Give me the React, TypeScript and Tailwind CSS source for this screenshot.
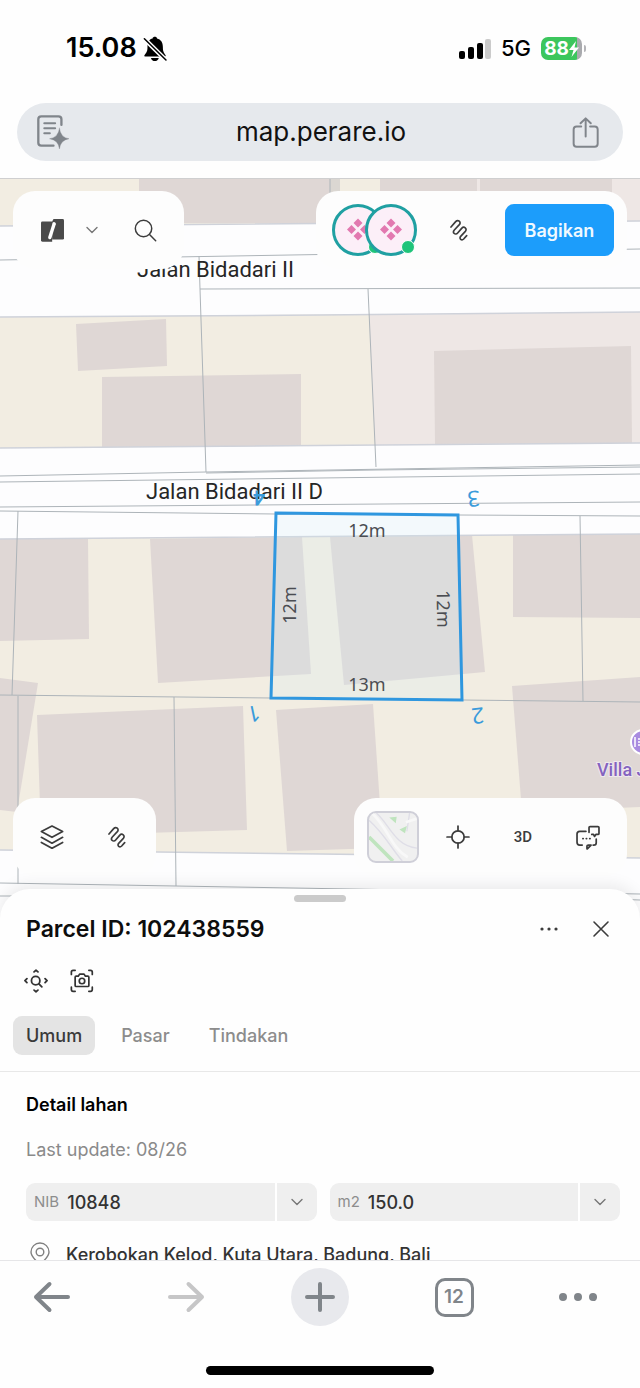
import { useState } from 'react'
import type { ReactNode } from 'react'

const TABS = ['Umum', 'Pasar', 'Tindakan']

const BUILDINGS = [
  '139,178 330,178 330,223 139,223',
  '380,178 477,178 477,221 380,221',
  '480,178 612,178 612,221 480,221',
  '76,324 166,319 167,366 78,371',
  '102,377 301,374 301,446 102,447',
  '434,351 631,346 632,443 435,444',
  '0,539 88,539 89,639 0,641',
  '150,539 302,537 311,674 158,683',
  '330,537 472,535 485,672 344,685',
  '513,535 640,534 640,618 513,617',
  '0,678 38,683 17,812 0,810',
  '37,715 243,706 247,830 41,836',
  '276,710 373,704 383,848 287,851',
  '512,686 640,677 640,807 522,812',
]

const BOUNDARIES = [
  'M0 260 640 249',
  'M199 256 200 289 640 288',
  'M200 289 206 472',
  'M368 289 376 467',
  'M0 476 206 472 640 465',
  'M206 473 376 470 640 467',
  'M0 482 640 474',
  'M0 507 640 502',
  'M0 511 276 514 458 515 640 516',
  'M18 511 12 695',
  'M580 516 583 701',
  'M0 695 271 698 462 700 640 702',
  'M18 696V884',
  'M174 697 176 886',
  'M0 883 176 886 640 894',
  'M0 896H30',
  'M610 899 640 900',
]

function Icon({ box, w, h, children }: { box: string; w: number; h: number; children: ReactNode }) {
  return (
    <svg viewBox={box} width={w} height={h} fill="none" stroke="currentColor" strokeLinecap="round" strokeLinejoin="round" aria-hidden="true" className="shrink-0">
      {children}
    </svg>
  )
}

function ToolButton({ label, children }: { label: string; children: ReactNode }) {
  return (
    <button aria-label={label} className="flex size-[52px] items-center justify-center rounded-lg text-[#3c3c3c]">
      {children}
    </button>
  )
}

function Chevron() {
  return (
    <Icon box="0 0 12 8" w={12} h={8}>
      <path d="M1 1.5 6 6.5 11 1.5" strokeWidth="1.4" />
    </Icon>
  )
}

function Squiggle() {
  return (
    <Icon box="323 378 60 66" w={20} h={22}>
      <path d="M329 403 343 387C350 379 361 388 354 396L339 412C332 420 342 429 349 421L361 407C368 399 379 408 372 416L358 431C352 438 361 445 367 439L376 429" strokeWidth="5" transform="translate(0 -1)" />
    </Icon>
  )
}

function Avatar({ className }: { className?: string }) {
  return (
    <div className={`relative size-[52px] rounded-full border-[3px] border-[#20a0a2] bg-[#fceff8] ${className ?? ''}`}>
      <svg viewBox="0 0 46 46" className="size-full" aria-hidden="true">
        <g fill="#e279b0">
          <path d="M23 11.500 27.500 16 23 20.500 18.500 16z" />
          <path d="M23 24.500 27.500 29 23 33.500 18.500 29z" />
          <path d="M16.500 18 21 22.500 16.500 27 12 22.500z" />
          <path d="M29.500 18 34 22.500 29.500 27 25 22.500z" />
        </g>
      </svg>
      <span className="absolute right-[-1px] bottom-[-1px] size-[14px] rounded-full border border-white bg-[#1fc47a]" />
    </div>
  )
}

function StatusBar() {
  return (
    <div className="flex h-[95px] items-center justify-between pt-0.5 pr-[54px] pl-[66px] text-black">
      <div className="flex items-center gap-1.5">
        <span className="text-[27px] font-semibold">15.08</span>
        <svg viewBox="430 106 70 76" width="24" height="26" aria-hidden="true">
          <path d="M434 162C441 154 443 150 443 138C443 122 449 115 458 113C459 107 470 107 471 113C482 116 488 124 488 138C488 150 490 154 496 162Q498 166 493 166H437Q432 166 434 162Z" />
          <path d="M453 170H476C474 182 455 182 453 170Z" />
          <path d="M433 117 494 177" stroke="#fff" strokeWidth="8" />
          <path d="M435 112 497 173" stroke="#fff" strokeWidth="8" />
          <path d="M434 114 497 176" stroke="#000" strokeWidth="4.500" strokeLinecap="round" />
        </svg>
      </div>
      <div className="flex items-center gap-2.5">
        <svg viewBox="0 0 32 20" width="32" height="20" aria-hidden="true">
          <rect x="0" y="12" width="6" height="8" rx="2" />
          <rect x="9" y="8" width="6" height="12" rx="2" />
          <rect x="18" y="4" width="6" height="16" rx="2" />
          <rect x="26" y="0" width="6" height="20" rx="2" fill="#cbcbcb" />
        </svg>
        <span className="text-[22px] font-medium">5G</span>
        <div className="flex items-center gap-0.5">
          <div className="flex h-[23px] w-[41px] items-center justify-center rounded-[7px] bg-linear-to-r from-[#3cc65d] from-88% to-[#a9aaae] to-88% text-white">
            <span className="text-[19px] leading-none font-bold">88</span>
            <svg viewBox="0 0 10 16" width="10" height="16" fill="#fff" aria-hidden="true">
              <path d="M7 0 0 9H4.500L2.500 16 10 6.500H5.500z" />
            </svg>
          </div>
          <span className="h-[7px] w-[2px] rounded-r-full bg-[#b4b4b8]" />
        </div>
      </div>
    </div>
  )
}

function AddressBar() {
  return (
    <div className="mx-[17px] mt-2 mb-[17px] flex h-[58px] items-center justify-between rounded-full bg-[#e6e9ed] px-[20px] text-[#80858b]">
      <button aria-label="Mode baca">
        <Icon box="111 343 100 106" w={33} h={35}>
          <path d="M185 373V356Q185 347 176 347H124Q115 347 115 356V427Q115 436 124 436H161" strokeWidth="7" />
          <path d="M133 368H166M133 383H166M133 398H150" strokeWidth="6" />
          <path d="M179 383Q182 411 208 415Q182 419 179 446Q176 419 149 415Q176 411 179 383Z" fill="currentColor" strokeWidth="1" />
        </Icon>
      </button>
      <input aria-label="Alamat" defaultValue="map.perare.io" className="min-w-0 flex-1 bg-transparent text-center text-[26px] leading-[32px] text-[#111] outline-none" />
      <button aria-label="Bagikan halaman" className="mr-1">
        <Icon box="755 350 82 94" w={27} h={31}>
          <path d="M783 379H769Q760 379 760 388V431Q760 440 769 440H824Q833 440 833 431V388Q833 379 824 379H810" strokeWidth="6" />
          <path d="M796.500 409V355M781 369 796.500 354 812 369" strokeWidth="6" />
        </Icon>
      </button>
    </div>
  )
}

function ParcelMap() {
  return (
    <svg viewBox="0 178 640 742" preserveAspectRatio="xMidYMin slice" className="absolute inset-0 size-full" role="img" aria-label="Peta persil">
      <rect y="178" width="640" height="742" fill="#fdfdfe" />
      <g fill="#f2ede2">
        <path d="M0 178H640V221L0 226Z" />
        <path d="M0 317 380 314V445L0 448Z" />
        <path d="M0 539 640 534V858L320 854 0 850Z" />
      </g>
      <g fill="#eee7e5">
        <path d="M369 315 640 312V443L375 445Z" />
        <path d="M612 178H640V221H612Z" />
      </g>
      <path d="M330 178H340V223H330Z" fill="#dbd7d2" />
      <path d="M477 178H480V221H477Z" fill="#eee7e5" />
      {BUILDINGS.map(points => <polygon key={points} points={points} fill="#dfd7d5" />)}
      <g fill="none" stroke="#cfd2da" strokeWidth="1.500">
        <path d="M0 226 640 221M0 317 320 315 640 312M0 448 640 443M0 539 640 534M0 850 320 854 640 858" />
      </g>
      <g fill="none" stroke="#adb4b9">
        {BOUNDARIES.map(d => <path key={d} d={d} />)}
        <path d="M330 178V223" />
        <path d="M0 178.500H640" stroke="#cfcfd0" />
      </g>

      <g fill="#262626" className="font-[Roboto,sans-serif]" fontSize="22">
        <text x="137" y="277">Jalan Bidadari II</text>
        <text x="146" y="499">Jalan Bidadari II D</text>
      </g>

      <polygon points="276,513 458,515 462,700 271,698" fill="#d2edf8" fillOpacity="0.23" stroke="#2f97df" strokeWidth="3" />
      <g textAnchor="middle" className="font-['Noto_Sans',sans-serif]">
        <g fill="#4b4d52" fontSize="18">
          <text x="367" y="537">12m</text>
          <text x="367" y="691">13m</text>
          <text transform="translate(296 605) rotate(-90)">12m</text>
          <text transform="translate(437 609) rotate(89)">12m</text>
        </g>
        <g fill="#3a9bdb" fontSize="22">
          <text transform="translate(252 706) rotate(168)">1</text>
          <text transform="translate(477 708) rotate(174)">2</text>
          <text transform="translate(473 491) rotate(176)">3</text>
          <text transform="translate(259 491) rotate(180)" fontSize="19" stroke="#3a9bdb">4</text>
        </g>
      </g>

      <circle cx="643" cy="742" r="12" fill="#a98be0" stroke="#fff" strokeWidth="2" />
      <path d="M635 737V747M638 739H644M638 742H644M638 745H644" stroke="#fff" strokeWidth="1.500" fill="none" />
      <text x="597" y="776" fontSize="18" fill="#8463bf" stroke="#efe9ee" strokeWidth="2" paintOrder="stroke" className="font-[Roboto,sans-serif] font-medium">Villa J</text>
    </svg>
  )
}

function MapTools() {
  return (
    <div className="relative flex h-full flex-col justify-between px-[13px] pt-[13px] pb-[44px]">
      <div className="flex items-start justify-between">
        <div className="flex items-center rounded-[22px] bg-[#fdfdfd] p-[13px]">
          <ToolButton label="Proyek">
            <svg viewBox="120 652 74 74" width="25" height="25" aria-hidden="true">
              <path d="M127 662H156V722H127Q123 722 123 718V666Q123 662 127 662Z" fill="#4a4a4a" />
              <path d="M160 655H187Q191 655 191 659V712Q191 716 187 716H156V662Z" fill="#4a4a4a" />
              <path d="M149 710 162 669" stroke="#fff" strokeWidth="10" strokeLinecap="round" />
            </svg>
          </ToolButton>
          <button aria-label="Pilih proyek" className="mr-[13px] flex h-[52px] w-[28px] items-center justify-center text-[#777]">
            <Chevron />
          </button>
          <ToolButton label="Cari">
            <Icon box="399 653 70 70" w={23} h={23}>
              <circle cx="428" cy="682" r="25" strokeWidth="4.500" />
              <path d="M447 701 465 719" strokeWidth="4.500" />
            </Icon>
          </ToolButton>
        </div>
        <div className="flex items-center gap-4 rounded-[22px] bg-[#fdfdfd] py-[13px] pr-[13px] pl-4">
          <div className="flex">
            <Avatar />
            <Avatar className="-ml-[19px]" />
          </div>
          <ToolButton label="Gambar"><Squiggle /></ToolButton>
          <button className="ml-1 h-[52px] w-[109px] rounded-[9px] bg-[#1c9dfb] text-[18px] font-semibold text-[#f0f9ff]">Bagikan</button>
        </div>
      </div>

      <div className="flex items-end justify-between">
        <div className="flex gap-[13px] rounded-[22px] bg-[#fdfdfd] p-[13px]">
          <ToolButton label="Lapisan">
            <Icon box="122 376 70 70" w={24} h={24}>
              <path d="M157 379 188 395 157 412 126 395Z" strokeWidth="5" />
              <path d="M126 412 157 429 188 412M126 427 157 444 188 427" strokeWidth="5" />
            </Icon>
          </ToolButton>
          <ToolButton label="Ukur"><Squiggle /></ToolButton>
        </div>
        <div className="flex gap-[13px] rounded-[22px] bg-[#fdfdfd] p-[13px]">
          <button aria-label="Peta dasar" className="size-[52px] overflow-hidden rounded-[9px] border-2 border-[#cfcfd8] bg-[#f0f0f0]">
            <svg viewBox="0 0 52 52" className="size-full" fill="none" aria-hidden="true">
              <path d="M0 26 26 52" stroke="#bfe4be" strokeWidth="4" />
              <path d="M0 8C16 22 24 38 36 52M8 0C22 12 28 36 52 38M44 0 41 20" stroke="#dfdee7" strokeWidth="1.500" />
              <path d="M3 0C20 15 24 38 42 48M52 6 40 10" stroke="#f8f8f8" strokeWidth="3" />
              <path d="M22 5 30 4 29 11ZM33 18 41 14 39 22Z" fill="#bfe4be" />
            </svg>
          </button>
          <ToolButton label="Lokasi saya">
            <Icon box="378 377 70 70" w={24} h={24}>
              <circle cx="413" cy="412" r="18" strokeWidth="5" />
              <path d="M413 380V394M413 430V444M381 412H395M431 412H445" strokeWidth="5" />
            </Icon>
          </ToolButton>
          <ToolButton label="Tampilan 3D">
            <span className="font-[Roboto,sans-serif] text-[15px] font-medium">3D</span>
          </ToolButton>
          <ToolButton label="Komentar">
            <Icon box="768 376 70 72" w={24} h={25}>
              <path d="M797 394H779Q771 394 771 402V426Q771 434 779 434H786M818 434H820Q827 434 827 427V417" strokeWidth="5" />
              <path d="M800 445V437Q800 434 804 434H812L801 445" strokeWidth="5" />
              <path d="M806 397V383Q806 380 809 380H832Q835 380 835 383V400Q835 403 832 403H826L822 409 819 403H814" strokeWidth="5" />
              <path d="M788 415H789M798 415H799M808 415H809" strokeWidth="5" />
            </Icon>
          </ToolButton>
        </div>
      </div>
    </div>
  )
}

function Field({ id, label, value }: { id: string; label: string; value: string }) {
  return (
    <div className="flex h-[38px] min-w-0 flex-1 items-center rounded-[9px] bg-[#efefef]">
      <label htmlFor={id} className="px-2 text-[15px] text-[#8d8d8d]">{label}</label>
      <input id={id} defaultValue={value} className="w-0 min-w-0 flex-1 bg-transparent text-[18px] font-medium text-[#333] outline-none" />
      <button aria-label={`Opsi ${label}`} className="flex h-full w-[42px] items-center justify-center border-l-2 border-white text-[#777]">
        <Chevron />
      </button>
    </div>
  )
}

function ParcelSheet() {
  const [tab, setTab] = useState('Umum')

  return (
    <section className="relative -mt-[31px] rounded-t-[30px] bg-[#fefefe] pt-1.5 shadow-[0_-4px_16px_rgba(0,0,0,0.08)]">
      <div className="mx-auto mb-px h-[7px] w-[52px] rounded-full bg-[#cbcbcb]" />
      <div className="flex h-[52px] items-center justify-between pr-[13px] pl-[26px]">
        <h1 className="text-[23px] font-semibold text-[#0d0d0d]">Parcel ID: 102438559</h1>
        <div className="flex">
          <ToolButton label="Lainnya">
            <Icon box="0 0 18 4" w={18} h={4}>
              <path d="M2 2H2.010M9 2H9.010M16 2H16.010" strokeWidth="3.200" />
            </Icon>
          </ToolButton>
          <ToolButton label="Tutup">
            <Icon box="0 0 18 18" w={18} h={18}>
              <path d="M2 2 16 16M16 2 2 16" strokeWidth="1.600" />
            </Icon>
          </ToolButton>
        </div>
      </div>
      <div className="flex h-[52px] items-center gap-[22px] pl-6 text-[#333]">
        <button aria-label="Fokus ke persil">
          <Icon box="71 265 74 74" w={24} h={24}>
            <circle cx="107" cy="301" r="13" strokeWidth="5.500" />
            <path d="M117 311 126 320M102 274 108 269 114 274M102 330 108 335 114 330M80 295 74 301 80 307M136 295 142 301 136 307" strokeWidth="5.500" />
          </Icon>
        </button>
        <button aria-label="Tangkapan layar">
          <Icon box="210 267 70 70" w={24} h={24}>
            <path d="M214 283V276Q214 271 219 271H225M265 271H270Q275 271 275 276V283M275 320V327Q275 332 270 332H265M225 332H219Q214 332 214 327V320" strokeWidth="5" />
            <path d="M225 291Q225 288 228 288H234L238 282H251L255 288H262Q265 288 265 291V315Q265 318 262 318H228Q225 318 225 315Z" strokeWidth="5" />
            <circle cx="245" cy="302" r="8" strokeWidth="5" />
          </Icon>
        </button>
      </div>
      <div role="tablist" className="flex gap-[13px] border-b border-[#e8e8e8] px-[13px] pt-[9px] pb-4">
        {TABS.map(t => (
          <button
            key={t}
            role="tab"
            aria-selected={t === tab}
            onClick={() => setTab(t)}
            className={`h-[39px] rounded-[9px] px-[13px] text-[18px] font-medium ${
              t === tab ? 'bg-[#e4e4e4] text-[#3a3a3a]' : 'text-[#8c8c8c]'
            }`}
          >
            {t}
          </button>
        ))}
      </div>
      <div className="flex flex-col gap-[19px] pt-5 pr-5 pl-[26px]">
        <h2 className="text-[18px] leading-[26px] font-semibold text-black">Detail lahan</h2>
        <p className="text-[18px] leading-[26px] text-[#8a8a8a]">Last update: 08/26</p>
        <div className="mt-px flex gap-[13px]">
          <Field id="nib" label="NIB" value="10848" />
          <Field id="luas" label="m2" value="150.0" />
        </div>
        <div className="flex h-5 items-start gap-4 overflow-hidden pt-0.5 pl-1 text-[18px] leading-[26px] font-medium text-[#333]">
          <span className="text-[#808080]">
            <Icon box="0 0 20 24" w={20} h={24}>
              <path d="M10 1C5 1 1 5 1 10C1 15 6 18 10 23C14 18 19 15 19 10C19 5 15 1 10 1Z" strokeWidth="1.400" />
              <circle cx="10" cy="10" r="3.800" strokeWidth="1.400" />
            </Icon>
          </span>
          <span className="whitespace-nowrap">Kerobokan Kelod, Kuta Utara, Badung, Bali</span>
        </div>
      </div>
    </section>
  )
}

function BrowserBar() {
  return (
    <nav className="relative border-t border-[#e6e6e8] bg-[#fefefe] pt-[7px] pb-[13px] text-[#80858a]">
      <div className="flex justify-between px-[23px]">
        <button aria-label="Kembali" className="flex size-[58px] items-center justify-center">
          <Icon box="0 0 38 32" w={38} h={32}>
            <path d="M35 16H3M16.500 3 3 16 16.500 29" strokeWidth="4" />
          </Icon>
        </button>
        <button aria-label="Maju" className="flex size-[58px] items-center justify-center text-[#c6c6c7]">
          <Icon box="0 0 38 32" w={38} h={32}>
            <path d="M3 16H35M21.500 3 35 16 21.500 29" strokeWidth="4" />
          </Icon>
        </button>
        <button aria-label="Tab baru" className="flex size-[58px] items-center justify-center rounded-full bg-[#e8e9ed]">
          <Icon box="0 0 32 32" w={32} h={32}>
            <path d="M16 3V29M3 16H29" strokeWidth="4" />
          </Icon>
        </button>
        <button aria-label="12 tab" className="flex size-[58px] items-center justify-center">
          <span className="flex size-[39px] items-center justify-center rounded-[10px] border-[3px] border-current text-[19px] font-semibold">12</span>
        </button>
        <button aria-label="Menu" className="flex size-[58px] items-center">
          <Icon box="0 0 38 8" w={38} h={8}>
            <path d="M4 4H4.010M19 4H19.010M34 4H34.010" strokeWidth="8" />
          </Icon>
        </button>
      </div>
      <div className="mx-auto mt-10 h-[9px] w-[228px] rounded-full bg-black" />
    </nav>
  )
}

export default function App() {
  return (
    <div className="flex min-h-screen flex-col bg-[#fefefe] font-[Inter,sans-serif]">
      <header>
        <StatusBar />
        <AddressBar />
      </header>
      <main className="flex flex-1 flex-col">
        <div className="relative flex min-h-[520px] flex-1 flex-col overflow-hidden">
          <ParcelMap />
          <div className="flex flex-1 flex-col *:flex-1"><MapTools /></div>
        </div>
        <ParcelSheet />
      </main>
      <BrowserBar />
    </div>
  )
}
